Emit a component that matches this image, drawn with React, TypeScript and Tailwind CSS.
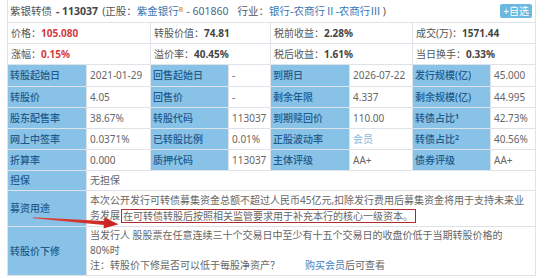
import React from "react";

const L = "bg-[#88c2e6] text-[#1f5a8c] font-medium pl-[2px] flex items-center whitespace-nowrap";
const V = "bg-white text-[#666] pl-[3px] flex items-center whitespace-nowrap";
const TOP = "bg-white col-span-2 pl-[3px] flex items-center whitespace-nowrap text-[#555]";

function Sup({ children }: { children: React.ReactNode }) {
  return <sup className="text-[7px] font-bold relative -top-[1px]">{children}</sup>;
}

export default function App() {
  return (
    <div
      className="relative w-[554px] h-[278px] bg-white overflow-hidden text-[10px] leading-[15px]"
      style={{ fontFamily: '"Noto Sans", "Noto Sans CJK SC", sans-serif' }}
    >
      <div className="ml-[7px] w-[529px] bg-[#dde3e8] px-px pb-px grid gap-px grid-cols-[78px_63px_77px_41px_78px_62px_77px_44px] grid-rows-[22px_20px_20px_21px_20px_20px_20px_20px_19px_35px_48px]">
        {/* title row */}
        <div className="col-span-8 bg-white flex items-center justify-between pl-[2px] pr-[3px] whitespace-nowrap">
          <div className="flex items-center text-[10.5px]">
            <span className="text-[#555]">紫银转债</span>
            <span className="font-bold text-[#444] mx-[4px]">- 113037</span>
            <span className="text-[#555]">(正股：</span>
            <span className="text-[#3a76b2]">紫金银行</span>
            <Sup><span className="text-[#f0a030]">R</span></Sup>
            <span className="text-[#4b6a89] ml-[3px]">- 601860</span>
            <span className="text-[#555] ml-[9px]">行业：</span>
            <span className="text-[#3a76b2]">银行-农商行Ⅱ-农商行Ⅲ</span>
            <span className="text-[#555] ml-[2px]">)</span>
          </div>
          <div className="bg-[#6bb9df] text-white text-[10px] leading-[14px] h-[14px] px-[3px] rounded-[2px]">+自选</div>
        </div>

        {/* price row */}
        <div className={TOP}>价格：<span className="font-bold text-[#d23a3f]">105.080</span></div>
        <div className={TOP}>转股价值：<span className="font-bold text-[#444]">74.81</span></div>
        <div className={TOP}>税前收益：<span className="font-bold text-[#444]">2.28%</span></div>
        <div className={TOP}>成交(万)：<span className="font-bold text-[#444]">1571.44</span></div>

        <div className={TOP}>涨幅：<span className="font-bold text-[#d23a3f]">0.15%</span></div>
        <div className={TOP}>溢价率：<span className="font-bold text-[#444]">40.45%</span></div>
        <div className={TOP}>税后收益：<span className="font-bold text-[#444]">1.61%</span></div>
        <div className={TOP}>当日换手：<span className="font-bold text-[#444]">0.33%</span></div>

        <div className={L}>转股起始日</div>
        <div className={V}>2021-01-29</div>
        <div className={L}>回售起始日</div>
        <div className={V}>-</div>
        <div className={L}>到期日</div>
        <div className={V}>2026-07-22</div>
        <div className={L}>发行规模(亿)</div>
        <div className={V}>45.000</div>

        <div className={L}>转股价</div>
        <div className={V}>4.05</div>
        <div className={L}>回售价</div>
        <div className={V}>-</div>
        <div className={L}>剩余年限</div>
        <div className={V}>4.337</div>
        <div className={L}>剩余规模(亿)</div>
        <div className={V}>44.995</div>

        <div className={L}>股东配售率</div>
        <div className={V}>38.67%</div>
        <div className={L}>转股代码</div>
        <div className={V}>113037</div>
        <div className={L}>到期赎回价</div>
        <div className={V}>110.00</div>
        <div className={L}>转债占比<Sup>1</Sup></div>
        <div className={V}>42.73%</div>

        <div className={L}>网上中签率</div>
        <div className={V}>0.0371%</div>
        <div className={L}>已转股比例</div>
        <div className={V}>0.01%</div>
        <div className={L}>正股波动率</div>
        <div className={V}><span className="text-[#86b6dc]">会员</span></div>
        <div className={L}>转债占比<Sup>2</Sup></div>
        <div className={V}>40.56%</div>

        <div className={L}>折算率</div>
        <div className={V}>0.000</div>
        <div className={L}>质押代码</div>
        <div className={V}>113037</div>
        <div className={L}>主体评级</div>
        <div className={V}>AA+</div>
        <div className={L}>债券评级</div>
        <div className={V}>AA+</div>

        <div className={L}>担保</div>
        <div className={`${V} col-span-7`}>无担保</div>

        <div className={L}>募资用途</div>
        <div className="col-span-7 bg-white text-[#666] pl-[3px] pt-[2px] whitespace-nowrap">
          <div>本次公开发行可转债募集资金总额不超过人民币45亿元,扣除发行费用后募集资金将用于支持未来业</div>
          <div className="flex items-center">
            务发展
            <span className="ml-[1px] border-[1.5px] border-[#b02a2c] leading-[12px] pl-[1px] pr-[2px]">在可转债转股后按照相关监管要求用于补充本行的核心一级资本。</span>
          </div>
        </div>

        <div className={L}>转股价下修</div>
        <div className="col-span-7 bg-white text-[#666] pl-[3px] pt-[1px] whitespace-nowrap">
          <div>当发行人 股股票在任意连续三十个交易日中至少有十五个交易日的收盘价低于当期转股价格的</div>
          <div>80%时</div>
          <div>
            注：转股价下修是否可以低于每股净资产？
            <span className="ml-[25px] text-[#3d7fc1]">购买会员</span>
            <span>后可查看</span>
          </div>
        </div>
      </div>

      {/* red arrow annotation */}
      <svg className="absolute left-0 top-0 pointer-events-none" width="554" height="278" viewBox="0 0 554 278">
        <defs>
          <linearGradient id="ag" x1="0" y1="0" x2="1" y2="0">
            <stop offset="0" stopColor="#e0483f" />
            <stop offset="1" stopColor="#c8221f" />
          </linearGradient>
        </defs>
        <polygon
          points="33,217.2 104.1,220.9 104.4,217.6 118.5,224.2 103.6,228.4 103.9,225.0 33,218.3"
          fill="url(#ag)"
        />
      </svg>
    </div>
  );
}
